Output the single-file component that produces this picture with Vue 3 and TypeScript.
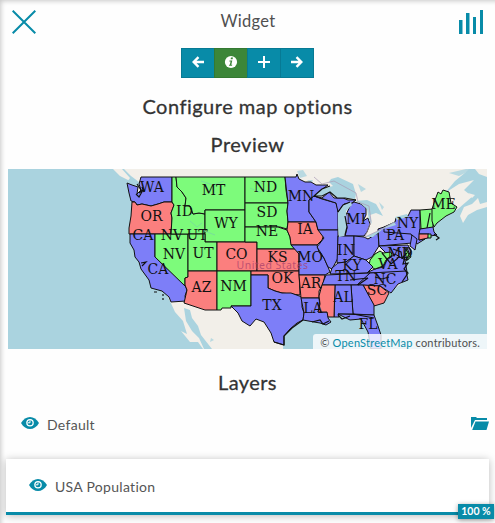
<script setup lang="ts">
interface Region {
  tone: 'blue' | 'green' | 'red'
  points: string
}

interface Label {
  text: string
  x: number
  y: number
}

interface Layer {
  name: string
  opacity?: number
}

const regions: Region[] = [
  { tone: 'blue', points: '127,183 132,185 138,187 137,194 141,190 139,184 141,177 172,177 172,202 164,202 158,204 151,206 142,204 137,205 135,202 131,201 129,193' },
  { tone: 'red', points: '132,202 135,202 137,205 142,204 151,206 158,204 164,202 172,202 174,205 171,213 172,218 171,234 129,234 129,228 131,216' },
  { tone: 'blue', points: '130,234 155,234 155,257 185,285 187,290 185,296 186,301 171,302 169,297 162,291 151,288 149,280 141,269 139,262 135,257 134,250 130,243' },
  { tone: 'green', points: '155,234 188,234 188,277 185,278 185,286 155,257' },
  { tone: 'green', points: '172,177 176,177 177,187 182,192 186,198 185,206 188,205 190,206 193,214 199,213 205,214 205,234 171,234 172,218 171,213 174,205 172,202' },
  { tone: 'green', points: '176,177 245,177 245,210 205,210 205,214 199,213 193,214 190,206 185,206 186,198 182,192 177,187' },
  { tone: 'green', points: '205,210 245,210 245,242 205,242' },
  { tone: 'green', points: '188,234 205,234 205,242 217,242 217,271 188,271' },
  { tone: 'red', points: '217,242 257,242 257,271 217,271' },
  { tone: 'red', points: '188,271 217,271 217,310 205,310 184,303 187,290 185,285 185,278 188,277' },
  { tone: 'green', points: '217,271 251,271 251,306 231,306 231,308 222,308 221,310 217,310' },
  { tone: 'green', points: '245,177 285,177 286,190 288,203 245,203' },
  { tone: 'green', points: '245,203 288,203 287,211 288,222 287,229 280,227 245,227' },
  { tone: 'green', points: '245,227 278,227 287,230 290,237 291,243 295,249 257,249 257,242 245,242' },
  { tone: 'red', points: '257,249 296,249 299,254 299,271 257,271' },
  { tone: 'red', points: '251,271 299,271 300,295 291,294 282,293 275,291 268,288 268,275 251,275' },
  { tone: 'blue', points: '251,275 268,275 268,288 275,291 282,293 291,293 302,297 302,307 304,313 303,320 297,323 290,329 284,336 284,345 274,342 271,333 264,322 256,319 250,326 242,321 238,313 231,306 251,306' },
  { tone: 'blue', points: '285,177 296,177 297,174 299,179 305,182 311,182 316,185 328,185 321,190 314,196 309,200 309,212 316,222 288,222 287,211 288,203' },
  { tone: 'red', points: '288,222 316,222 318,230 324,234 322,240 317,245 291,245 290,237 287,230' },
  { tone: 'blue', points: '291,245 317,245 319,252 324,258 328,267 330,272 325,275 299,275 299,254' },
  { tone: 'red', points: '299,275 325,275 323,284 319,291 319,298 301,298' },
  { tone: 'blue', points: '301,298 319,298 320,306 318,312 328,312 328,318 331,322 326,325 320,323 314,322 303,320 304,313' },
  { tone: 'blue', points: '309,200 314,196 322,199 336,203 338,210 338,230 318,230 316,222 309,212' },
  { tone: 'blue', points: '314,196 322,198 329,192 334,198 343,198 348,200 356,200 352,203 344,204 338,212 336,203' },
  { tone: 'blue', points: '351,204 354,202 361,204 366,208 366,215 363,221 368,218 370,224 367,232 364,236 345,236 347,228 345,217' },
  { tone: 'blue', points: '318,230 338,230 338,258 332,269 328,267 324,258 317,247 324,238' },
  { tone: 'blue', points: '338,236 354,236 354,256 346,262 337,263' },
  { tone: 'blue', points: '354,236 364,237 368,239 378,233 379,246 372,257 366,260 354,256' },
  { tone: 'blue', points: '378,229 384,227 412,227 417,234 412,243 379,246' },
  { tone: 'blue', points: '384,227 395,222 396,218 408,216 411,210 420,210 420,230 419,240 425,239 417,244 411,234 384,232' },
  { tone: 'green', points: '420,210 433,209 433,228 421,229' },
  { tone: 'green', points: '432,209 435,200 438,192 441,194 443,190 449,192 451,203 457,207 454,212 446,216 437,223 434,227 432,221' },
  { tone: 'blue', points: '420,229 433,227 434,232 437,235 430,236 428,234 419,234' },
  { tone: 'red', points: '419,234 429,234 428,238 419,240' },
  { tone: 'green', points: '428,234 431,234 431,238 428,238' },
  { tone: 'blue', points: '412,235 417,239 415,250 410,246' },
  { tone: 'blue', points: '379,246 408,245 411,251 408,260 400,258 389,256' },
  { tone: 'blue', points: '366,273 375,269 383,267 387,260 395,254 405,260 407,272' },
  { tone: 'green', points: '407,248 411,257 407,260 405,252' },
  { tone: 'green', points: '370,260 375,254 380,251 383,253 391,252 392,255 386,260 383,266 375,269 369,266' },
  { tone: 'blue', points: '330,274 332,268 338,263 346,262 354,256 366,260 373,267 367,273' },
  { tone: 'blue', points: '326,275 370,273 364,280 357,285 322,285' },
  { tone: 'blue', points: '370,273 406,271 408,280 398,284 391,293 380,286 357,285' },
  { tone: 'red', points: '363,285 380,286 389,293 384,303 374,306' },
  { tone: 'blue', points: '351,285 363,285 374,305 374,315 353,314' },
  { tone: 'blue', points: '335,285 351,285 353,314 338,314 339,317 334,317' },
  { tone: 'red', points: '322,285 335,285 334,317 328,317 327,312 318,312 320,304 319,296' },
  { tone: 'blue', points: '338,314 374,315 378,326 381,335 381,349 371,349 368,332 361,319 350,320' },
]

const labels: Label[] = [
  { text: 'WA', x: 152, y: 192 },
  { text: 'MT', x: 213.5, y: 195 },
  { text: 'ND', x: 265.5, y: 192 },
  { text: 'MN', x: 301, y: 201 },
  { text: 'OR', x: 151.5, y: 221 },
  { text: 'ID', x: 184.5, y: 216 },
  { text: 'WY', x: 226, y: 228 },
  { text: 'SD', x: 267, y: 217 },
  { text: 'NE', x: 267, y: 236 },
  { text: 'IA', x: 305, y: 234 },
  { text: 'CA', x: 143, y: 240 },
  { text: 'NV', x: 172, y: 240 },
  { text: 'UT', x: 197, y: 240 },
  { text: 'NV', x: 174, y: 259 },
  { text: 'UT', x: 203, y: 258 },
  { text: 'CO', x: 236.5, y: 259 },
  { text: 'KS', x: 277.5, y: 262 },
  { text: 'MO', x: 310, y: 262 },
  { text: 'CA', x: 158, y: 274 },
  { text: 'AZ', x: 201.5, y: 292 },
  { text: 'NM', x: 233.5, y: 291 },
  { text: 'OK', x: 282.5, y: 283 },
  { text: 'AR', x: 311, y: 288 },
  { text: 'TX', x: 272, y: 310 },
  { text: 'LA', x: 313, y: 313 },
  { text: 'MI', x: 356, y: 224 },
  { text: 'IN', x: 346, y: 255 },
  { text: 'KY', x: 352, y: 270 },
  { text: 'TN', x: 346, y: 281 },
  { text: 'AL', x: 343, y: 302 },
  { text: 'SC', x: 377, y: 295 },
  { text: 'FL', x: 368, y: 329 },
  { text: 'NC', x: 385, y: 284 },
  { text: 'VA', x: 388, y: 269 },
  { text: 'MD', x: 400, y: 258 },
  { text: 'PA', x: 395, y: 240 },
  { text: 'NY', x: 407.5, y: 228 },
  { text: 'ME', x: 443.5, y: 209 },
]

const layers: Layer[] = [{ name: 'Default' }, { name: 'USA Population', opacity: 100 }]
</script>

<template>
  <main class="panel">
    <header class="topbar">
      <svg class="close" viewBox="0 0 24 24"><path d="M.7.7 23.3 23.3M23.3.7.7 23.3" /></svg>
      <span class="title">Widget</span>
      <svg class="bars" viewBox="0 0 25 24"><path d="M0 10h3.5v14H0zM7 3h3.5v21H7zM14 7h3v17h-3zM21 0h3v24h-3z" /></svg>
    </header>

    <nav class="steps">
      <button type="button"><svg viewBox="0 0 14 14"><path class="line" d="M13 7H3M7.5 2.2 2.7 7l4.8 4.8" /></svg></button>
      <button type="button" class="active">
        <svg viewBox="0 0 14 14"><circle cx="7" cy="7" r="6.1" /><path class="mark" d="M7 2.6h2l-.4 1.7h-2zM5.5 5.4h2.8L7.3 9.8h1l-.3 1H4.9l.3-1h.6l.8-3.4h-1.3z" /></svg>
      </button>
      <button type="button"><svg viewBox="0 0 14 14"><path class="line plus" d="M7 1v12M1 7h12" /></svg></button>
      <button type="button"><svg viewBox="0 0 14 14"><path class="line" d="M1 7h10M6.5 2.2 11.3 7l-4.8 4.8" /></svg></button>
    </nav>

    <h2 class="configure">Configure map options</h2>
    <h2 class="preview">Preview</h2>

    <section class="map">
      <svg class="canvas" viewBox="8 169 479 180">
        <rect class="water" x="8" y="169" width="479" height="180" />
        <path class="land" d="M113 169 120 176 130 181 138 187 131 234 170 301 175 312 183 321 187 334 181 331 190 342 198 342 203 349H283L284 334 303 319 335 314 360 318 374 316 374 306 389 293 407 279 405 262 417 244 421 238 434 234 434 226 444 217 458 209 466 202 473 196 469 194 464 190 474 180 459 184 445 193 455 181 466 172 469 169Z" />
        <path class="land" d="M460 216 464 207 472 204 478 198 480 204 487 202V207L477 210 468 215 463 223ZM468 193 475 195 472 198ZM475 169 479 174 487 177V169Z" />
        <path class="water" d="M124 169 131 176 139 182 139 187 127 182 130 178 122 169ZM184 308 190 310 192 318 198 326 201 335 212 349H204L199 338 192 331 186 321Z" />
        <path class="water soft" d="M297 171 303 170 307 176 300 178ZM307 180 313 180 311 184ZM449 173 466 169H473L459 176ZM379 202 384 207 382 210ZM358 184 366 189 361 192ZM211 338 214 340 210 342Z" />

        <polygon v-for="(region, i) in regions" :key="i" :class="['state', region.tone]" :points="region.points" />

        <path class="lake" d="M314 196 322 189 333 186 329 182 331 179 338 177 353 184 356 194 355 199 345 198 337 198 330 192 322 196ZM338 213 343 205 351 202 352 205 346 211 347 227 344 236 339 237 338 226ZM355 201 367 200 376 204 383 216 376 213 370 215 372 224 369 220 367 209 360 203ZM365 237 378 231 394 222 396 225 383 229 373 237ZM395 217 407 214 408 217 397 220Z" />
        <path class="border" d="M314 177 322 184 334 181 345 187 356 193 358 202 369 206 371 221 365 237 382 229 395 222" />
        <path class="coast" d="M314 196 322 189 330 186M314 196 322 196 330 192 337 198 345 198 356 200M338 212 343 205 350 202M345 235 347 227 345 216M137 184 141 190 139 193 143 190 139 197 136 194M142 187 144 192M141 263 146 262 142 266M154 292H157M163 294V296M163 298V300M274 342 284 345 284 336 292 328 303 320M312 322 320 320 323 324 329 321M430 213 427 228M434 234 439 238 436 240M405 257 403 264 408 263 404 269 408 273 402 282M393 249 401 252 402 258 407 253M404 247 409 254 406 261M338 315 342 319 350 316M353 314 374 318M382 253 391 264 398 258M350 280 368 278 358 285M375 277 382 279 389 277" />
        <path class="faint" d="M201 181 213 185 224 181M250 188l9 4 10-2M190 221l7 6 5-4M202 230l13 5M255 181l9 3" />

        <text v-for="(label, i) in labels" :key="`label-${i}`" class="code" :x="label.x" :y="label.y">{{ label.text }}</text>
        <text class="country" x="272.5" y="269">United States</text>
      </svg>
      <div class="credit">© <a>OpenStreetMap</a> contributors.</div>
    </section>

    <h2 class="layers-title">Layers</h2>

    <div v-for="layer in layers" :key="layer.name" :class="['layer', { card: layer.opacity !== undefined }]">
      <svg class="eye" viewBox="0 0 18 12">
        <path d="M0 6C4.6-2 13.4-2 18 6 13.4 14 4.6 14 0 6Z" />
        <circle class="iris" cx="9" cy="5.8" r="3.8" />
        <circle cx="9" cy="5.8" r="2.5" />
        <path class="glint" d="M9 3.4v2.4H6.7" />
      </svg>
      <span class="name">{{ layer.name }}</span>
      <svg v-if="layer.opacity === undefined" class="folder" viewBox="0 0 18 13"><path d="M0 0h5l1 1h10v2H4L0 11ZM4.5 4.5H18L15.5 13H1.2Z" /></svg>
      <span v-else class="badge">{{ layer.opacity }} %</span>
    </div>
  </main>
</template>

<style>
body {
  overflow: hidden;
}
</style>

<style scoped>
.panel {
  box-sizing: border-box;
  width: 495px;
  height: 523px;
  padding: 0 8px;
  overflow: hidden;
  background: #fefefe;
  box-shadow: inset 3px 3px 5px -2px rgba(0, 0, 0, 0.22);
  color: #333;
  font-family: Lato, "Open Sans", sans-serif;
}
.topbar {
  display: flex;
  align-items: flex-start;
  justify-content: space-between;
  height: 38px;
  padding: 10px 3px 0 4px;
}
.close {
  width: 24px;
  height: 24px;
  fill: none;
  stroke: #088ba8;
  stroke-width: 2;
}
.bars {
  width: 25px;
  height: 24px;
  fill: #088ba8;
}
.title {
  padding-left: 1px;
  color: #505050;
  font-size: 16.5px;
  font-weight: 400;
  line-height: 23px;
  letter-spacing: 0.3px;
}
.steps {
  display: flex;
  justify-content: center;
  height: 30px;
  padding-right: 1px;
}
.steps button {
  box-sizing: border-box;
  display: flex;
  align-items: center;
  justify-content: center;
  width: 34px;
  height: 30px;
  margin-right: -1px;
  padding: 0 0 2px;
  border: 1px solid #077a94;
  background: #088ba8;
}
.steps .active {
  border-color: #347932;
  background: #3c8639;
}
.steps svg {
  width: 14px;
  height: 14px;
  fill: #fff;
}
.steps .line {
  fill: none;
  stroke: #fff;
  stroke-width: 2.4;
}
.steps .plus {
  stroke-width: 2;
}
.steps .mark {
  fill: #3c8639;
}
h2 {
  margin: 0;
  font-size: 20px;
  font-weight: 400;
  line-height: 24px;
  text-align: center;
  -webkit-text-stroke: 0.3px #333;
}
.configure {
  margin-top: 16px;
  letter-spacing: 0.5px;
}
.preview {
  margin-top: 14px;
  letter-spacing: 0.5px;
}
.map {
  position: relative;
  width: 479px;
  height: 180px;
  margin-top: 13px;
}
.canvas {
  display: block;
  width: 479px;
  height: 180px;
}
.water {
  fill: #aad3df;
}
.land {
  fill: #f2efe9;
}
.soft {
  opacity: 0.8;
}
.state {
  stroke: #111;
  stroke-width: 1;
  stroke-linejoin: round;
}
.blue {
  fill: #7d7ef8;
}
.green {
  fill: #7dfb7b;
}
.red {
  fill: #fb7f7e;
}
.lake {
  fill: #aad3df;
}
.border {
  fill: none;
  stroke: #a99bb5;
  stroke-width: 0.7;
}
.coast {
  fill: none;
  stroke: #111;
  stroke-width: 1.2;
}
.faint {
  fill: none;
  stroke: #78df99;
  stroke-width: 1;
}
.country {
  fill: #a8406c;
  fill-opacity: 0.75;
  font: 10.5px "Noto Sans", sans-serif;
  letter-spacing: 0.45px;
  text-anchor: middle;
}
.code {
  fill: #111;
  font: 14px "DejaVu Serif", serif;
  text-anchor: middle;
}
.credit {
  position: absolute;
  right: 0;
  bottom: 0;
  box-sizing: border-box;
  width: 174px;
  height: 15px;
  padding-right: 7px;
  border-radius: 3px 0 0;
  background: rgba(255, 255, 255, 0.8);
  color: #505050;
  font-size: 11px;
  font-weight: 400;
  line-height: 17px;
  letter-spacing: 0.2px;
  text-align: right;
  white-space: nowrap;
}
.credit a {
  color: #088ba8;
}
.layers-title {
  margin-top: 21px;
  letter-spacing: 0.4px;
}
.layer {
  display: flex;
  align-items: center;
  height: 20px;
  margin-top: 20px;
  padding-left: 13px;
}
.eye {
  width: 18px;
  height: 12px;
  margin: -3px 8px 0 0;
  fill: #088ba8;
}
.iris {
  fill: #fff;
}
.glint {
  fill: none;
  stroke: #fff;
  stroke-width: 1;
}
.name {
  color: #555;
  font-size: 14px;
  font-weight: 400;
  letter-spacing: 0.3px;
}
.folder {
  width: 18px;
  height: 13px;
  margin: -2px -2px 0 auto;
  fill: #088ba8;
}
.card {
  position: relative;
  box-sizing: border-box;
  width: 483px;
  height: 56px;
  margin: 25px 0 0 -2px;
  padding: 2px 0 0 23px;
  border-bottom: 3px solid #088ba8;
  background: #fff;
  box-shadow: 0 1px 8px rgba(0, 0, 0, 0.27);
}
.badge {
  position: absolute;
  right: -5px;
  bottom: -7px;
  width: 36px;
  height: 15px;
  background: #088ba8;
  box-shadow: 0 1px 5px rgba(0, 0, 0, 0.4);
  color: #fff;
  font-size: 10.5px;
  font-weight: 700;
  line-height: 15px;
  text-align: center;
}
</style>
